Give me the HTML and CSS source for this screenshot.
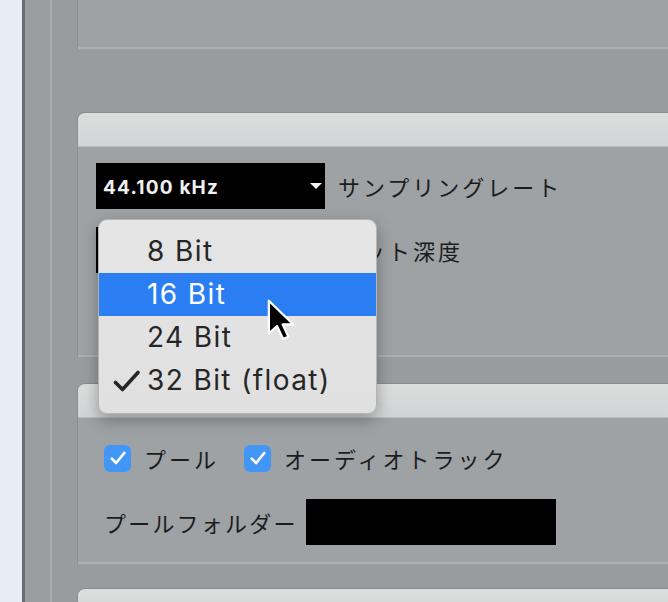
FILE: index.html
```html
<!DOCTYPE html>
<html lang="ja">
<head>
    <meta charset="UTF-8">
    <meta name="viewport" content="width=device-width, initial-scale=1.0">
    <title>プロジェクト設定</title>
    <link rel="stylesheet" href="styles.css">
</head>
<body>
    <div class="page">
        <div class="sidebar"></div>
        <div class="rail"></div>

        <div class="content">
            <!-- top panel, cut off by the window -->
            <div class="panel panel-top">
                <div class="panel-body body-top"></div>
            </div>

            <!-- audio format -->
            <div class="panel">
                <div class="panel-header"></div>
                <div class="panel-body body-format">
                    <div class="field-row">
                        <div class="select">
                            <span class="select-value">44.100 kHz</span>
                            <span class="select-arrow"></span>
                        </div>
                        <span class="field-label">サンプリングレート</span>
                    </div>
                    <div class="field-row">
                        <div class="select"></div>
                        <span class="field-label">ビット深度</span>
                    </div>

                    <!-- open popup menu -->
                    <div class="menu">
                        <div class="menu-item">8 Bit</div>
                        <div class="menu-item active">16 Bit</div>
                        <div class="menu-item">24 Bit</div>
                        <div class="menu-item checked">
                            <svg class="check" viewBox="0 0 27 22" width="27" height="22">
                                <path d="M2.5 12.5 L9.5 19.5 L25 2.5" fill="none" stroke="#262626" stroke-width="3.6" stroke-linecap="round" stroke-linejoin="round"/>
                            </svg>
                            32 Bit (float)
                        </div>
                        <svg class="cursor" viewBox="0 0 12 20" width="28" height="43" preserveAspectRatio="none">
                            <path d="M0.8 0.8 L0.8 16 L4.3 12.6 L6.9 18.6 L9.2 17.6 L6.7 11.8 L11.2 11.8 Z" fill="#000" stroke="#fff" stroke-width="1" stroke-linejoin="round"/>
                        </svg>
                    </div>
                </div>
            </div>

            <!-- import options -->
            <div class="panel">
                <div class="panel-header"></div>
                <div class="panel-body body-import">
                    <div class="check-row">
                        <label class="checkbox-item">
                            <span class="checkbox">
                                <svg viewBox="0 0 16 16" width="16" height="16">
                                    <path d="M3 8.5 L6.5 12 L13 4" fill="none" stroke="#fff" stroke-width="2.2" stroke-linecap="round" stroke-linejoin="round"/>
                                </svg>
                            </span>
                            <span class="field-label">プール</span>
                        </label>
                        <label class="checkbox-item">
                            <span class="checkbox">
                                <svg viewBox="0 0 16 16" width="16" height="16">
                                    <path d="M3 8.5 L6.5 12 L13 4" fill="none" stroke="#fff" stroke-width="2.2" stroke-linecap="round" stroke-linejoin="round"/>
                                </svg>
                            </span>
                            <span class="field-label">オーディオトラック</span>
                        </label>
                    </div>
                    <div class="folder-row">
                        <span class="field-label">プールフォルダー</span>
                        <div class="folder-box"></div>
                    </div>
                </div>
            </div>

            <div class="panel panel-last">
                <div class="panel-header"></div>
            </div>
        </div>
    </div>
</body>
</html>
```

FILE: styles.css
```css
body {
    margin: 0;
    overflow: hidden;
    background-color: #999c9f;
    font-family: "Noto Sans CJK JP", "Noto Sans", sans-serif;
}
.page {
    display: flex;
    height: 602px;
}
.sidebar {
    width: 22px;
    background-color: #e7edf4;
    border-right: 3px solid #6a6e72;
}
.rail {
    width: 25px;
    background-color: #9a9ea1;
    border-right: 2px solid #a9adb0;
}
.content {
    flex: 1;
    padding-left: 25px;
    background-color: #999c9f;
}
.panel {
    margin-top: 26px;
    border-top-left-radius: 7px;
    border-left: 1px solid #8b8f92;
}
.panel-top {
    margin-top: 0;
    border-radius: 0;
}
.panel-last {
    margin-top: 24px;
}
.panel-header {
    height: 33px;
    border-top: 1px solid #888c8f;
    border-top-left-radius: 7px;
    background: linear-gradient(#dcdddd, #d2d3d4);
    border-bottom: 1px solid #b9bbbd;
}
.panel-body {
    background-color: #9ea2a5;
    border-bottom: 2px solid #adb0b3;
}
.body-top {
    height: 47px;
}
.panel-top + .panel {
    margin-top: 63px;
}
.body-format {
    position: relative;
    height: 192px;
    padding: 16px 0 0 18px;
}
.field-row {
    display: flex;
    align-items: center;
    gap: 13px;
    margin-bottom: 18px;
}
.select {
    width: 229px;
    height: 46px;
    background-color: #000;
    display: flex;
    align-items: center;
    justify-content: space-between;
    padding: 0 1px 0 7px;
    box-sizing: border-box;
}
.select-value {
    color: #eef0f2;
    font-family: Inter, "Liberation Sans", sans-serif;
    font-weight: 700;
    font-size: 19px;
    letter-spacing: 1.2px;
    padding-top: 2px;
}
.select-arrow {
    width: 0;
    height: 0;
    margin-right: 2px;
    border-left: 6px solid transparent;
    border-right: 6px solid transparent;
    border-top: 6px solid #f4f4f4;
}
.field-label {
    color: #1b1c1d;
    font-size: 22px;
    letter-spacing: 3px;
    white-space: nowrap;
}
.menu {
    position: absolute;
    left: 20px;
    top: 72px;
    width: 279px;
    padding: 10px 0 11px;
    background: linear-gradient(#e5e5e5, #e0e0e0);
    border: 1px solid #b4b4b4;
    border-radius: 9px;
    box-shadow: 0 6px 16px rgba(0,0,0,0.3);
    box-sizing: border-box;
}
.menu-item {
    position: relative;
    height: 43px;
    line-height: 43px;
    padding-left: 48px;
    font-family: Inter, "Liberation Sans", sans-serif;
    font-size: 28px;
    letter-spacing: 1.4px;
    color: #262626;
}
.menu-item.active {
    background-color: #2a7ef1;
    color: #ffffff;
}
.check {
    position: absolute;
    left: 14px;
    top: 11px;
}
.cursor {
    position: absolute;
    left: 168px;
    top: 79px;
}
.body-import {
    height: 120px;
    padding: 24px 0 0 26px;
}
.check-row {
    display: flex;
    align-items: center;
    gap: 25px;
}
.checkbox-item {
    display: flex;
    align-items: center;
    gap: 13px;
}
.checkbox {
    width: 27px;
    height: 27px;
    border-radius: 6px;
    background-color: #4196f6;
    display: flex;
    align-items: center;
    justify-content: center;
}
.checkbox svg {
    width: 20px;
    height: 20px;
}
.folder-row {
    display: flex;
    align-items: center;
    gap: 8px;
    margin-top: 25px;
}
.folder-row .field-label {
    letter-spacing: 2.2px;
}
.folder-box {
    width: 250px;
    height: 46px;
    background-color: #000;
}
```
